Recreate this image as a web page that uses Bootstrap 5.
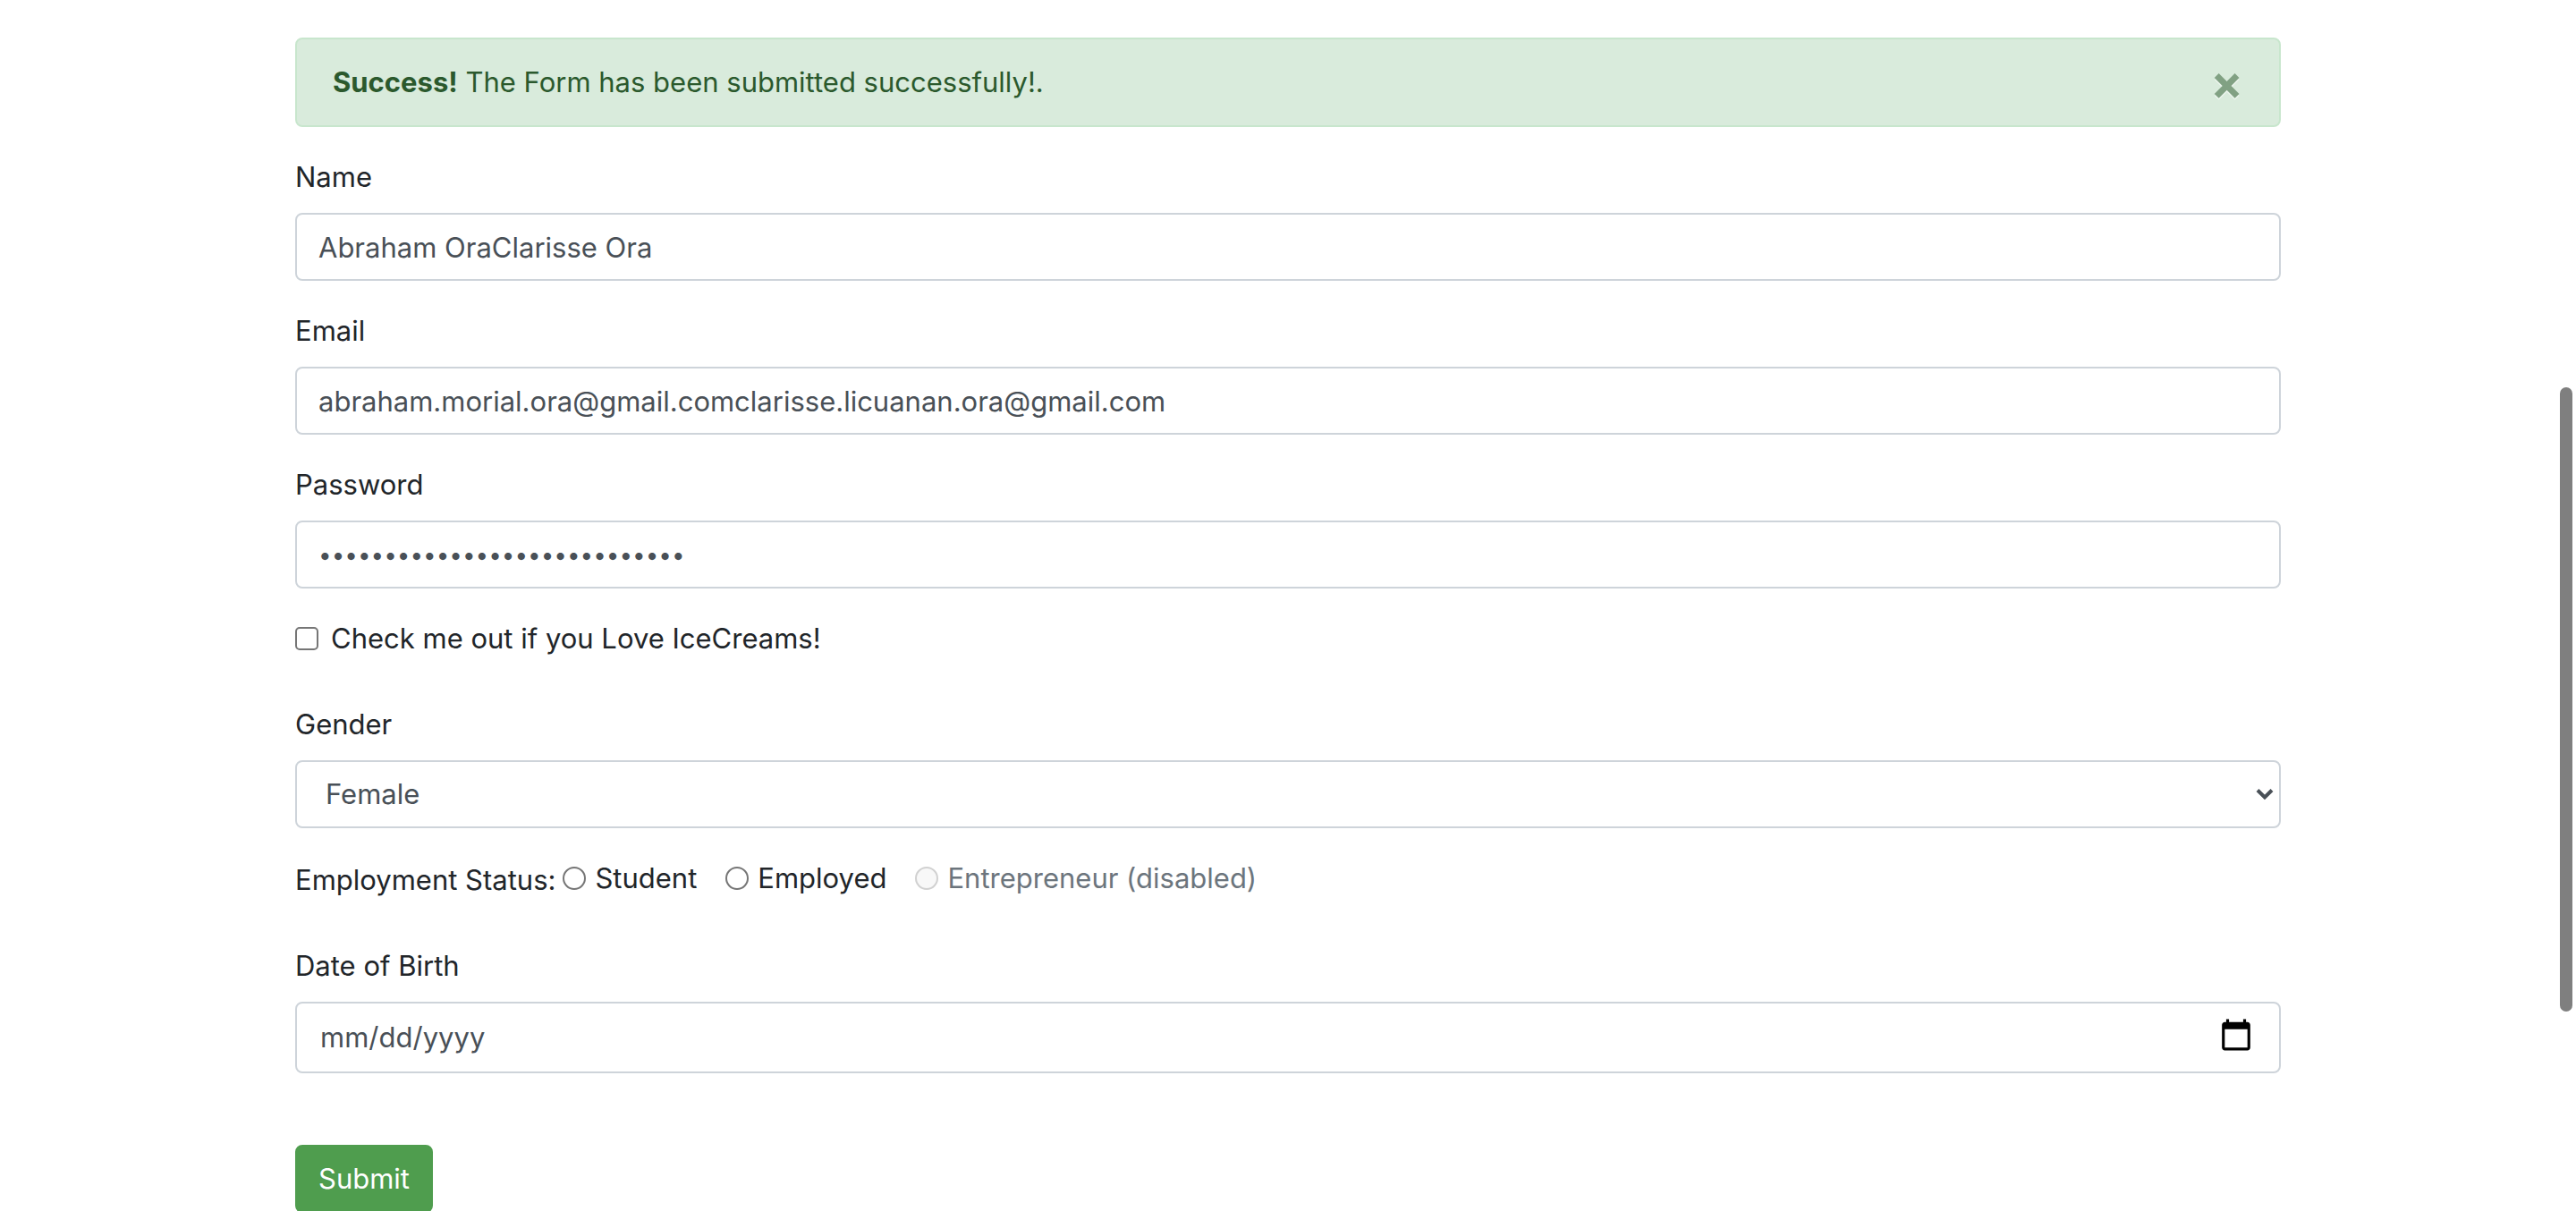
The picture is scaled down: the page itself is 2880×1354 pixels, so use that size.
<!DOCTYPE html>
<html lang="en-US">
<head>
<meta charset="utf-8">
<meta name="viewport" content="width=device-width, initial-scale=1">
<title>Form</title>
<link href="https://cdn.jsdelivr.net/npm/bootstrap@5.3.0/dist/css/bootstrap.min.css" rel="stylesheet">
<style>
  /* one rem is 32px, so Bootstrap's spacing scale doubles */
  html { font-size: 32px; }
  body { font-family: Inter, "Liberation Sans", sans-serif; font-size: 31px; line-height: 48px; color: #212529; background: #fff; }
  .page-scroll { height: 100vh; overflow: hidden; padding-top: 42px; }
  .form-wrap { max-width: 2280px; padding-left: 30px; padding-right: 30px; }
  .alert-success { --bs-alert-bg: #d9ebdc; --bs-alert-color: #2b592d; --bs-alert-border-color: #c8e6cd; padding: 24px 40px; border-width: 2px; border-radius: 8px; }
  .dismiss { border: 0; padding: 0; background: none; color: inherit; opacity: .5; font-size: 54px; font-weight: 700; line-height: 48px; text-shadow: 0 2px 0 #fff; }
  .form-label { margin-bottom: 16px; display: block; }
  .form-control, .form-select { font-size: 31px; line-height: 48px; height: 76px; padding: 12px 24px; border: 2px solid #ced4da; border-radius: 8px; color: #495057; background-color: #fff; }
  .form-select { padding-left: 32px; background-size: 20px 16px; background-position: right 6px center;
    background-image: url("data:image/svg+xml,%3csvg xmlns='http://www.w3.org/2000/svg' viewBox='0 0 20 16'%3e%3cpath fill='none' stroke='%23495057' stroke-width='4' d='M2 3.5l8 8 8-8'/%3e%3c/svg%3e"); }
  .secret-field { font-size: 26px; }
  .date-field { height: 80px; padding-left: 26px; }
  .date-field::-webkit-calendar-picker-indicator { width: 40px; height: 40px; padding: 0; margin-right: 4px; margin-bottom: 4px; }
  .tick { appearance: none; width: 26px; height: 26px; margin: 0; border: 2px solid #767676; background: #fff; flex: none; }
  .tick[type=checkbox] { border-radius: 5px; }
  .tick[type=radio] { border-radius: 50%; }
  .tick:checked { background: #767676; }
  .tick:disabled { border-color: #d1d1d1; background: #f8f8f8; }
  .tick:disabled + label { color: #6c757d; }
  .check-row { gap: 14px; margin-bottom: 48px; }
  .status-row { gap: 8px; margin-bottom: 46px; }
  .status-options { gap: 32px; padding-bottom: 4px; }
  .status-option { gap: 10px; }
  .btn-success { --bs-btn-bg: #4f9d4e; --bs-btn-border-color: #4f9d4e; font-size: 31px; line-height: 48px; padding: 12px 24px; border-width: 2px; border-radius: 8px; margin-top: 48px; }
  .scroll-thumb { position: fixed; right: 4px; top: 32vh; height: 51.5vh; width: 14px; border-radius: 7px; background: #7f7f7f; }
</style>
<script src="https://cdn.jsdelivr.net/npm/bootstrap@5.3.0/dist/js/bootstrap.bundle.min.js"></script>
</head>
<body>
<main class="page-scroll">
  <div class="container-fluid form-wrap">
    <div class="alert alert-success d-flex justify-content-between align-items-center mb-3" role="alert">
      <div><strong>Success!</strong> The Form has been submitted successfully!.</div>
      <button type="button" class="dismiss" data-bs-dismiss="alert" aria-label="Close">×</button>
    </div>
    <form>
      <div class="mb-3">
        <label class="form-label" for="name">Name</label>
        <input type="text" class="form-control" id="name" value="Abraham OraClarisse Ora">
      </div>
      <div class="mb-3">
        <label class="form-label" for="email">Email</label>
        <input type="email" class="form-control" id="email" value="abraham.morial.ora@gmail.comclarisse.licuanan.ora@gmail.com">
      </div>
      <div class="mb-3">
        <label class="form-label" for="password">Password</label>
        <input type="password" class="form-control secret-field" id="password" value="abrahamoraclarisseora1234567">
      </div>
      <div class="check-row d-flex align-items-center">
        <input type="checkbox" class="tick" id="love">
        <label for="love">Check me out if you Love IceCreams!</label>
      </div>
      <div class="mb-3">
        <label class="form-label" for="gender">Gender</label>
        <select class="form-select" id="gender"><option>Male</option><option selected>Female</option></select>
      </div>
      <div class="status-row d-flex align-items-center">
        <span id="status-label">Employment Status:</span>
        <div class="status-options d-flex" role="radiogroup" aria-labelledby="status-label">
          <div class="status-option d-flex align-items-center"><input type="radio" class="tick" name="status" id="student"><label for="student">Student</label></div>
          <div class="status-option d-flex align-items-center"><input type="radio" class="tick" name="status" id="employed"><label for="employed">Employed</label></div>
          <div class="status-option d-flex align-items-center"><input type="radio" class="tick" name="status" id="entrepreneur" disabled><label for="entrepreneur">Entrepreneur (disabled)</label></div>
        </div>
      </div>
      <div class="mb-3">
        <label class="form-label" for="dob">Date of Birth</label>
        <input type="date" class="form-control date-field" id="dob">
      </div>
      <button type="submit" class="btn btn-success">Submit</button>
    </form>
  </div>
</main>
<div class="scroll-thumb" aria-hidden="true"></div>
</body>
</html>
